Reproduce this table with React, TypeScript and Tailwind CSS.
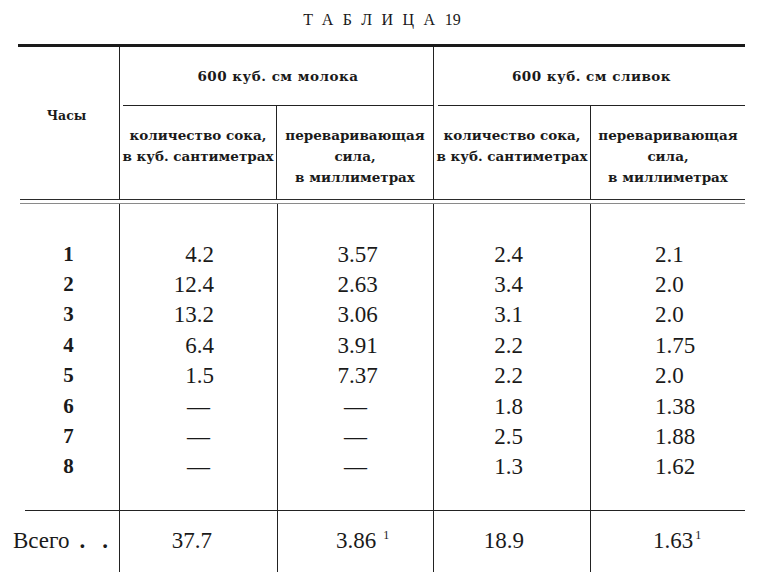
import React from 'react';

const serif = { fontFamily: '"Liberation Serif", "DejaVu Serif", serif' };
const head = { fontFamily: '"DejaVu Serif", "Liberation Serif", serif' };

const hours = ['1', '2', '3', '4', '5', '6', '7', '8'];
const milkJuice = ['4.2', '12.4', '13.2', '6.4', '1.5', '—', '—', '—'];
const milkPower = ['3.57', '2.63', '3.06', '3.91', '7.37', '—', '—', '—'];
const creamJuice = ['2.4', '3.4', '3.1', '2.2', '2.2', '1.8', '2.5', '1.3'];
const creamPower = ['2.1', '2.0', '2.0', '1.75', '2.0', '1.38', '1.88', '1.62'];

function Col({ values, className = '', cell = '' }: { values: string[]; className?: string; cell?: string }) {
  return (
    <div className={`flex flex-col pt-[35px] pb-[28px] ${className}`}>
      {values.map((v, i) => (
        <div key={i} className={`h-[30.4px] flex items-center ${v === '—' ? 'justify-center' : cell}`}>
          {v}
        </div>
      ))}
    </div>
  );
}

export default function App() {
  return (
    <div className="w-[760px] h-[576px] bg-white text-[#1a1a1a] overflow-hidden" style={serif}>
      {/* title */}
      <div className="h-[44px] flex items-center justify-center pb-[4px] pl-[4px] text-[16px]">
        <span className="tracking-[9.5px]">ТАБЛИЦА</span>
        <span>19</span>
      </div>

      <div className="ml-[18px] w-[727px]">
        <div className="border-t-[3px] border-[#1a1a1a]" />

        {/* header */}
        <div className="flex h-[152px] text-[13.5px] font-bold leading-[21px]" style={head}>
          <div className="w-[102px] border-r border-[#222] flex justify-center pt-[58px] pr-[4px] text-[12.5px]">Часы</div>

          <div className="w-[314px] border-r border-[#222] flex flex-col">
            <div className="h-[59px] border-b border-[#222] flex items-center justify-center ml-[3px] tracking-[0.5px]">
              600 куб. см молока
            </div>
            <div className="flex flex-1">
              <div className="w-[157px] border-r border-[#222] text-center pt-[19px] whitespace-nowrap">
                количество сока,<br />в куб. сантиметрах
              </div>
              <div className="flex-1 text-center pt-[19px]">
                переваривающая<br />сила,<br />в миллиметрах
              </div>
            </div>
          </div>

          <div className="w-[311px] flex flex-col">
            <div className="h-[59px] border-b border-[#222] flex items-center justify-center ml-[4px] tracking-[0.5px]">
              600 куб. см сливок
            </div>
            <div className="flex flex-1">
              <div className="w-[157px] border-r border-[#222] text-center pt-[19px] whitespace-nowrap">
                количество сока,<br />в куб. сантиметрах
              </div>
              <div className="flex-1 text-center pt-[19px]">
                переваривающая<br />сила,<br />в миллиметрах
              </div>
            </div>
          </div>
        </div>

        {/* double rule */}
        <div className="h-[5px] border-t border-b border-t-[#2a2a2a] border-b-[#8a8a8a] ml-[2px]" />

        {/* body */}
        <div className="flex text-[23px] leading-none">
          <Col values={hours} className="w-[102px] border-r border-[#222] items-center font-bold text-[21px]" cell="justify-center" />
          <Col values={milkJuice} className="w-[158px] border-r border-[#222]" cell="justify-end pr-[63px]" />
          <Col values={milkPower} className="w-[156px] border-r border-[#222]" cell="justify-center pl-[4px]" />
          <Col values={creamJuice} className="w-[157px] border-r border-[#222]" cell="justify-end pr-[67px]" />
          <Col values={creamPower} className="flex-1" cell="justify-start pl-[64px]" />
        </div>

        {/* total */}
        <div className="flex h-[62px] text-[23px] leading-none">
          <div className="w-[102px] border-r border-[#222] flex flex-col">
            <div className="border-t border-[#222] ml-[7px]" />
            <div className="flex-1 flex items-center -ml-[5px] pb-[2px]">
              <span>Всего</span>
              <span className="ml-[10px] font-bold">.</span>
              <span className="ml-[17px] font-bold">.</span>
            </div>
          </div>
          <div className="w-[158px] border-r border-t border-[#222] flex items-center justify-end pr-[65px] pb-[2px]">37.7</div>
          <div className="w-[156px] border-r border-t border-[#222] flex items-center justify-center pl-[14px] pb-[2px]">
            3.86<span className="relative -top-[6px] ml-[7px] text-[12px]">1</span>
          </div>
          <div className="w-[157px] border-r border-t border-[#222] flex items-center justify-end pr-[66px] pb-[2px]">18.9</div>
          <div className="flex-1 border-t border-[#222] flex items-center pl-[62px] pb-[2px]">
            1.63<span className="relative -top-[6px] ml-[2px] text-[12px]">1</span>
          </div>
        </div>
      </div>
    </div>
  );
}
